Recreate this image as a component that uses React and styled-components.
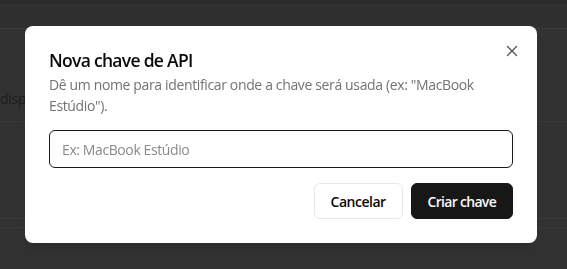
import React from "react";
import styled, { createGlobalStyle } from "styled-components";

const Global = createGlobalStyle`
  html, body { margin: 0; padding: 0; }
  body {
    background: #333333;
    font-family: "Segoe UI", "Open Sans", "Noto Sans", sans-serif;
    overflow: hidden;
  }
  * { box-sizing: border-box; }
`;

const Page = styled.div`
  width: 567px;
  height: 269px;
  display: flex;
  flex-direction: column;
  background: #333333;
`;

const TopStrip = styled.div`
  height: 4px;
  background: #2c2c2c;
`;

const Header = styled.div`
  height: 25px;
  background: #303030;
  border-bottom: 1px solid #3a3a3a;
`;

const Row = styled.div`
  height: ${(p) => p.$h}px;
  border-bottom: 1px solid #3a3a3a;
  padding-top: ${(p) => p.$top || 0}px;
  color: #1e1e1e;
  font-size: 14px;
  line-height: 20px;
  letter-spacing: -0.3px;
  font-family: "Open Sans", sans-serif;
`;

const Overlay = styled.div`
  position: fixed;
  inset: 0;
  background: rgba(0, 0, 0, 0.02);
`;

const Dialog = styled.div`
  position: fixed;
  left: 25px;
  top: 26px;
  width: 512px;
  background: #ffffff;
  border-radius: 8px;
  padding: 24px;
  display: flex;
  flex-direction: column;
  box-shadow: 0 10px 15px -3px rgba(0, 0, 0, 0.1), 0 4px 6px -4px rgba(0, 0, 0, 0.1);
`;

const DialogHeader = styled.div`
  display: flex;
  flex-direction: column;
  gap: 3px;
`;

const Title = styled.h2`
  margin: 0;
  font-size: 17.5px;
  line-height: 21px;
  font-weight: 600;
  color: #0a0a0a;
  letter-spacing: -0.7px;
`;

const Description = styled.p`
  margin: 0;
  font-size: 14px;
  line-height: 21px;
  color: #737373;
  letter-spacing: -0.36px;
`;

const Input = styled.input`
  margin-top: 14px;
  height: 38px;
  width: 100%;
  border: 1px solid #1a1a1a;
  border-radius: 6px;
  padding: 0 12px;
  font-family: inherit;
  font-size: 14px;
  letter-spacing: -0.4px;
  color: #0a0a0a;
  caret-color: #0a0a0a;
  outline: none;
  background: #fff;
  &::placeholder { color: #8a8a8a; }
`;

const Footer = styled.div`
  margin-top: 15px;
  display: flex;
  justify-content: flex-end;
  gap: 8px;
`;

const Button = styled.button`
  height: 36px;
  padding: 0 16px;
  border-radius: 6px;
  font-family: inherit;
  font-size: 14px;
  letter-spacing: ${(p) => (p.$primary ? "-0.7px" : "-0.5px")};
  font-weight: 600;
  cursor: pointer;
  border: 1px solid ${(p) => (p.$primary ? "#171717" : "#e8e8e8")};
  background: ${(p) => (p.$primary ? "#171717" : "#ffffff")};
  color: ${(p) => (p.$primary ? "#fafafa" : "#0a0a0a")};
`;

const Close = styled.button`
  position: absolute;
  right: 16px;
  top: 16px;
  width: 18px;
  height: 18px;
  padding: 0;
  border: none;
  background: transparent;
  color: #3a3a3a;
  opacity: 0.85;
  display: flex;
  align-items: center;
  justify-content: center;
  cursor: pointer;
`;

export default function App() {
  return (
    <>
      <Global />
      <Page>
        <TopStrip />
        <Header />
        <Row $h={93} $top={60}>dispositivos</Row>
        <Row $h={97} />
        <Row $h={9} />
      </Page>
      <Overlay />
      <Dialog role="dialog">
        <DialogHeader>
          <Title>Nova chave de API</Title>
          <Description>
            Dê um nome para identificar onde a chave será usada (ex: "MacBook Estúdio").
          </Description>
        </DialogHeader>
        <Input autoFocus placeholder="Ex: MacBook Estúdio" />
        <Footer>
          <Button>Cancelar</Button>
          <Button $primary>Criar chave</Button>
        </Footer>
        <Close aria-label="Fechar">
          <svg width="18" height="18" viewBox="0 0 24 24" fill="none" stroke="currentColor" strokeWidth="1.8" strokeLinecap="round" strokeLinejoin="round">
            <path d="M18 6 6 18" />
            <path d="m6 6 12 12" />
          </svg>
        </Close>
      </Dialog>
    </>
  );
}
